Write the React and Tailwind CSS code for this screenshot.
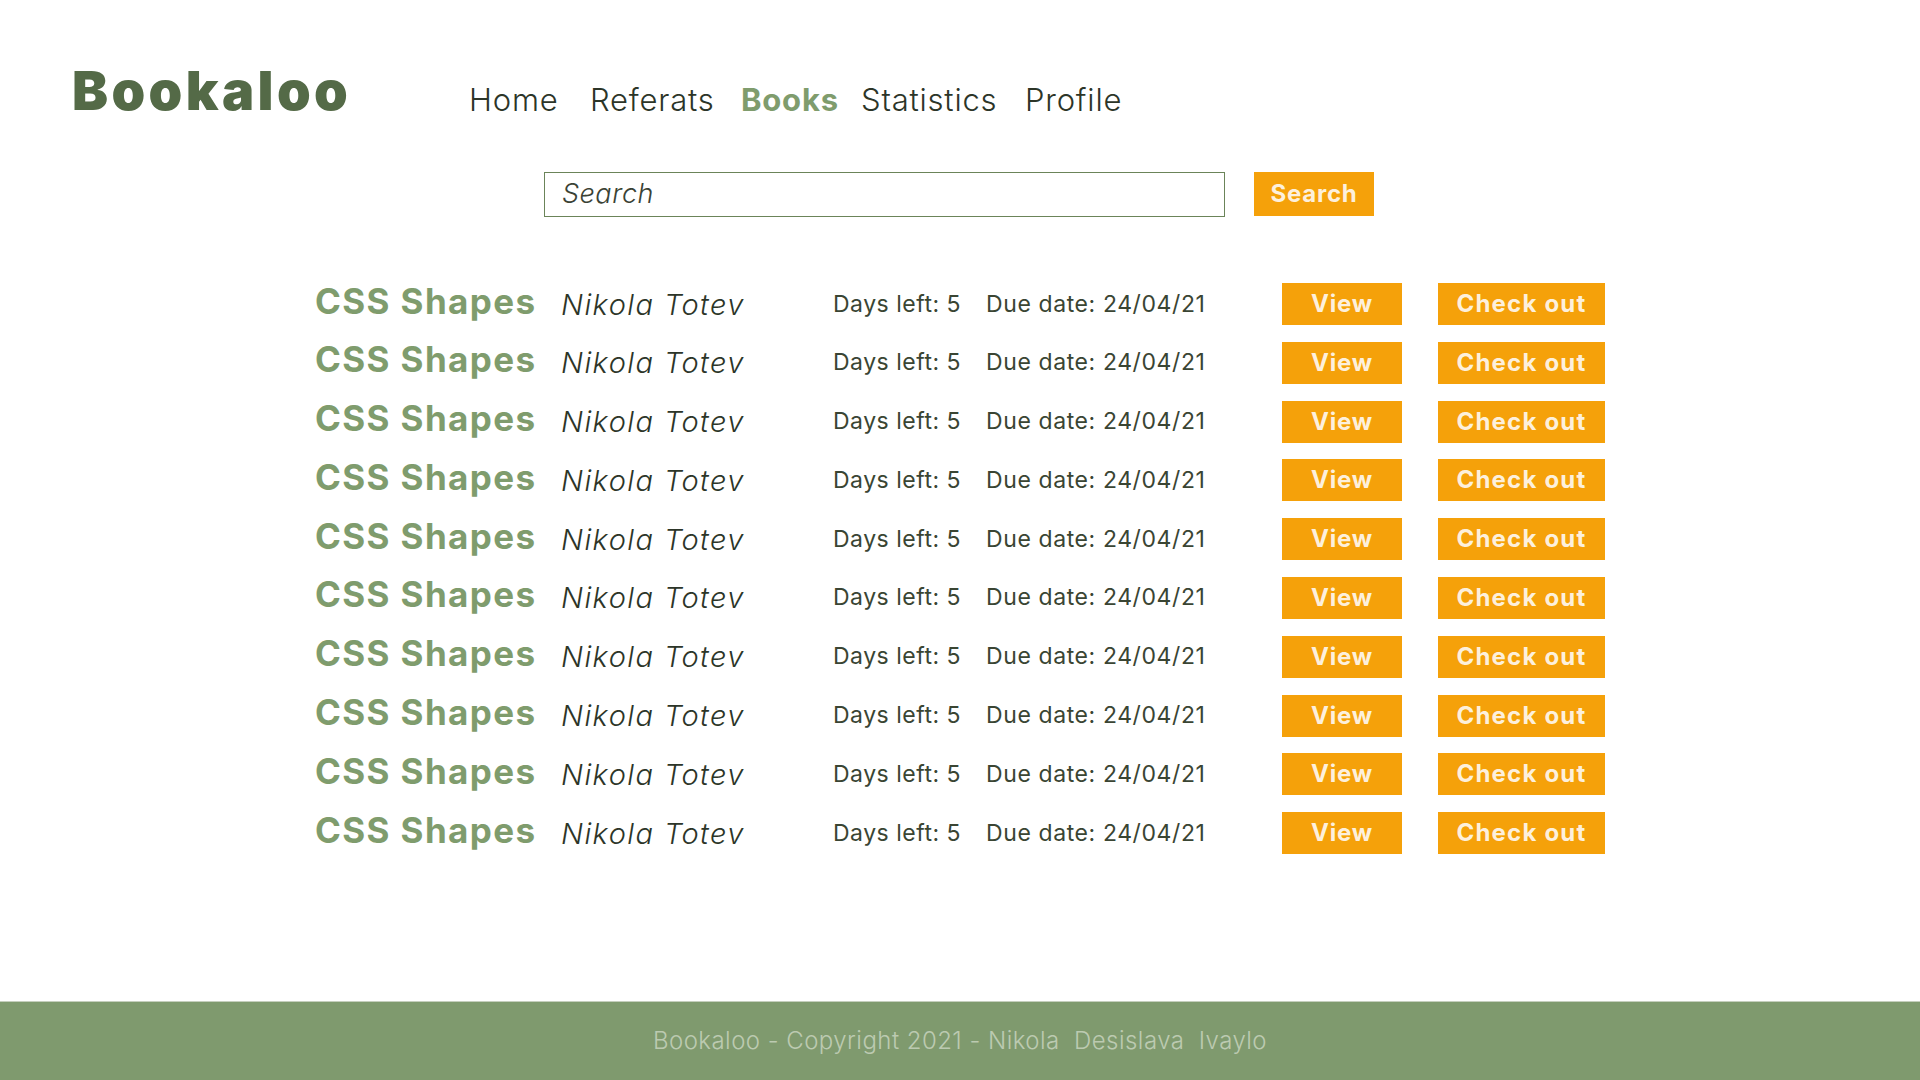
import React from "react";

const rows = Array.from({ length: 10 });

export default function App() {
  return (
    <div className="min-h-screen flex flex-col bg-white font-['Inter','Liberation_Sans',sans-serif]">
      <header className="flex items-start pt-[64px] pl-[72px]">
        <div className="w-[397px] text-[54px] leading-none font-black text-[#546a47] tracking-[3.4px]">Bookaloo</div>
        <nav className="flex mt-[20px] text-[31px] leading-none font-light text-[#2c3528] tracking-[0.8px]">
          <a className="w-[121px]">Home</a>
          <a className="w-[151px]">Referats</a>
          <a className="w-[120px] font-bold text-[#7f9c6d]">Books</a>
          <a className="w-[164px]">Statistics</a>
          <a>Profile</a>
        </nav>
      </header>

      <div className="flex mt-[54px] pl-[544px]">
        <div className="w-[681px] h-[45px] border border-[#6b8459] flex items-center pl-[17px]">
          <span className="text-[27px] italic font-light text-[#3a4235] tracking-[0.5px]">Search</span>
        </div>
        <button className="ml-[29px] w-[120px] h-[44px] bg-[#f5a10a] text-[#fdf0dc] text-[24px] font-bold tracking-[0.8px]">Search</button>
      </div>

      <div className="mt-[66px] pl-[315px] flex flex-col gap-y-[16.8px]">
        {rows.map((_, i) => (
          <div key={i} className="grid grid-cols-[246px_272px_153px_296px_156px_167px] items-center h-[42px]">
            <div className="text-[35px] font-bold text-[#7f9c6d] leading-none mb-[6px] tracking-[1.4px]">CSS Shapes</div>
            <div className="text-[29px] italic font-light text-[#2c3528] leading-none tracking-[1.4px]">Nikola Totev</div>
            <div className="text-[23px] text-[#3a4533] leading-none tracking-[0.5px]">Days left: 5</div>
            <div className="text-[23px] text-[#3a4533] leading-none tracking-[0.6px]">Due date: 24/04/21</div>
            <button className="w-[120px] h-[42px] bg-[#f5a10a] text-[#fdf0dc] text-[24px] font-bold tracking-[0.8px]">View</button>
            <button className="w-[167px] h-[42px] bg-[#f5a10a] text-[#fdf0dc] text-[24px] font-bold tracking-[1.2px]">Check out</button>
          </div>
        ))}
      </div>

      <footer className="mt-auto h-[79px] bg-[#7f9a6e] border-t border-[#c5cfbd] flex items-center justify-center">
        <span className="text-[24px] font-light text-[#bccab1] whitespace-pre tracking-[0.45px]">Bookaloo - Copyright 2021 - Nikola  Desislava  Ivaylo</span>
      </footer>
    </div>
  );
}
